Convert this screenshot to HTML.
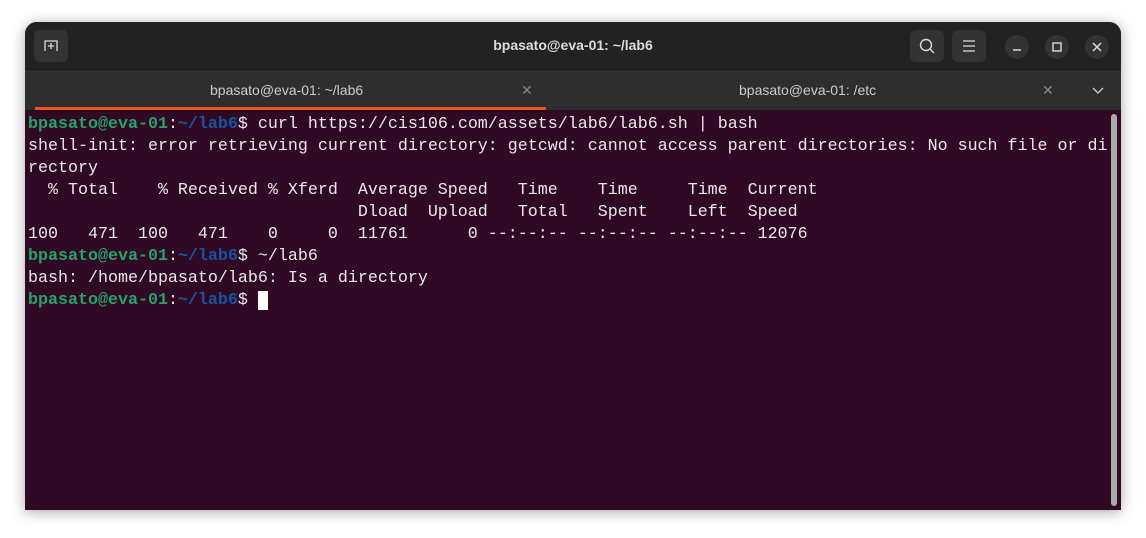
<!DOCTYPE html>
<html><head><meta charset="utf-8"><style>
body{margin:0;width:1146px;height:538px;background:#fff;position:relative;overflow:hidden;font-family:"Liberation Sans",sans-serif}
.win{position:absolute;left:25px;top:22px;width:1096px;height:488px;border-radius:12px 12px 0 0;overflow:hidden;background:#300a24;box-shadow:0 2px 14px rgba(0,0,0,.35)}
.hdr{position:absolute;left:0;top:0;width:100%;height:47px;background:#222;border-bottom:1px solid #1a1a1a}
.tabs{position:absolute;left:0;top:48px;width:100%;height:40px;background:#2e2e2e}
.btn{position:absolute;top:8px;width:34px;height:32px;border-radius:6px;background:#333}
.circ{position:absolute;top:13px;width:24px;height:24px;border-radius:50%;background:#333}
.title{position:absolute;left:0;width:100%;top:15px;text-align:center;color:#ddd;font-weight:bold;font-size:14px}
.tab{position:absolute;top:12px;color:#ccc;font-size:14px}
.term{position:absolute;left:3px;top:92px;font-family:"Liberation Mono",monospace;font-size:16.67px;line-height:22px;color:#e8e8e8;white-space:pre}
.g{color:#26a269;font-weight:bold}.b{color:#1653a0;font-weight:bold}
</style></head><body>
<div class="win">
 <div class="hdr">
  <div class="btn" style="left:9px"><svg width="34" height="32"><path d="M11 21V11h12v10M17 13v6M14 16h6" stroke="#ddd" stroke-width="1.3" fill="none"/></svg></div>
  <div class="title">bpasato@eva-01: ~/lab6</div>
  <div class="btn" style="left:885px"><svg width="34" height="32"><circle cx="16" cy="15" r="5.5" stroke="#ddd" stroke-width="1.4" fill="none"/><path d="M20 19l4 4" stroke="#ddd" stroke-width="1.4"/></svg></div>
  <div class="btn" style="left:927px"><svg width="34" height="32"><path d="M11 11h12M11 16h12M11 21h12" stroke="#ddd" stroke-width="1.3"/></svg></div>
  <div class="circ" style="left:980px"><svg width="24" height="24"><path d="M8 15h8" stroke="#ddd" stroke-width="1.5"/></svg></div>
  <div class="circ" style="left:1020px"><svg width="24" height="24"><rect x="8" y="8" width="8" height="8" stroke="#ddd" stroke-width="1.4" fill="none"/></svg></div>
  <div class="circ" style="left:1060px"><svg width="24" height="24"><path d="M8 8l8 8M16 8l-8 8" stroke="#ddd" stroke-width="1.5"/></svg></div>
 </div>
 <div class="tabs">
  <div class="tab" style="left:185px">bpasato@eva-01: ~/lab6</div>
  <div class="tab" style="left:496px;color:#888">✕</div>
  <div class="tab" style="left:714px">bpasato@eva-01: /etc</div>
  <div class="tab" style="left:1017px;color:#888">✕</div>
  <svg style="position:absolute;left:1066px;top:14px" width="14" height="12"><path d="M2 4l5 5 5-5" stroke="#ccc" stroke-width="1.4" fill="none"/></svg>
  <div style="position:absolute;left:10px;top:37px;width:511px;height:3px;background:#e95420"></div>
 </div>
 <div style="position:absolute;left:1086px;top:92px;width:6px;height:392px;border-radius:3px;background:#aaa"></div>
<div class="term"><span class="g">bpasato@eva-01</span>:<span class="b">~/lab6</span>$ curl https://cis106.com/assets/lab6/lab6.sh | bash
shell-init: error retrieving current directory: getcwd: cannot access parent directories: No such file or di
rectory
  % Total    % Received % Xferd  Average Speed   Time    Time     Time  Current
                                 Dload  Upload   Total   Spent    Left  Speed
100   471  100   471    0     0  11761      0 --:--:-- --:--:-- --:--:-- 12076
<span class="g">bpasato@eva-01</span>:<span class="b">~/lab6</span>$ ~/lab6
bash: /home/bpasato/lab6: Is a directory
<span class="g">bpasato@eva-01</span>:<span class="b">~/lab6</span>$ <span style="background:#fff"> </span></div>
</div>
</body></html>
